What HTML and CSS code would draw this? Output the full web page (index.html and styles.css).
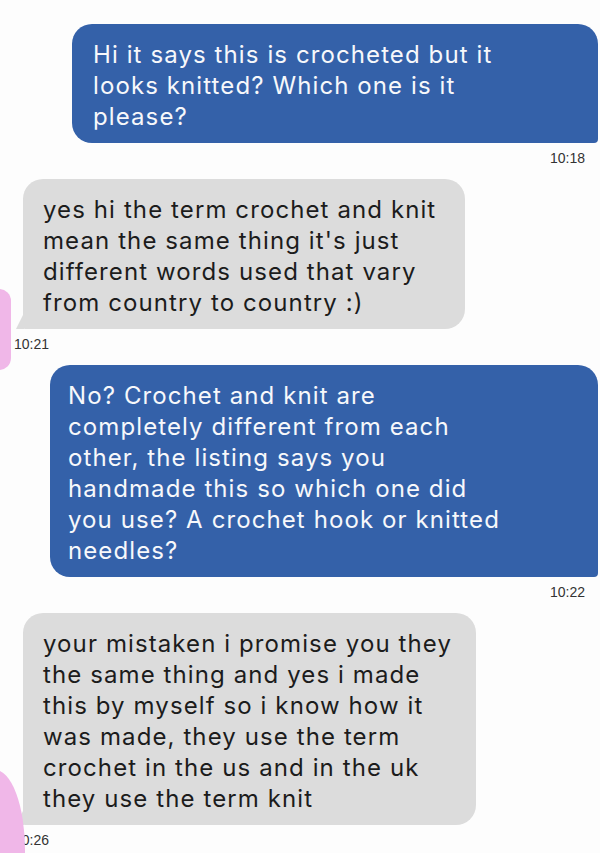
FILE: index.html
```html
<!DOCTYPE html>
<html lang="en">
<head>
    <meta charset="UTF-8">
    <meta name="viewport" content="width=device-width, initial-scale=1.0">
    <title>Messages</title>
    <link rel="stylesheet" href="styles.css">
</head>
<body>
    <div class="chat">
        <div class="msg out">
            <div class="bubble first">Hi it says this is crocheted but it<br>looks knitted? Which one is it<br>please?</div>
            <div class="time">10:18</div>
        </div>

        <div class="msg in">
            <div class="bubble second">yes hi the term crochet and knit<br>mean the same thing it's just<br>different words used that vary<br>from country to country :)</div>
            <div class="time">10:21</div>
        </div>

        <div class="msg out">
            <div class="bubble third">No? Crochet and knit are<br>completely different from each<br>other, the listing says you<br>handmade this so which one did<br>you use? A crochet hook or knitted<br>needles?</div>
            <div class="time">10:22</div>
        </div>

        <div class="msg in">
            <div class="bubble fourth">your mistaken i promise you they<br>the same thing and yes i made<br>this by myself so i know how it<br>was made, they use the term<br>crochet in the us and in the uk<br>they use the term knit</div>
            <div class="time">10:26</div>
        </div>

        <!-- avatars peeking in from the left edge -->
        <div class="avatar avatar-top"></div>
        <div class="avatar avatar-bottom"></div>
    </div>
</body>
</html>
```

FILE: styles.css
```css
/* Global Styles */
body {
    margin: 0;
    padding: 0;
    background-color: #fdfdfd;
    font-family: Inter, "Liberation Sans", sans-serif;
}

.chat {
    position: relative;
    display: flex;
    flex-direction: column;
    height: 853px;
    padding-top: 24px;
    box-sizing: border-box;
    overflow: hidden;
}

/* Message rows */
.msg {
    display: flex;
    flex-direction: column;
    margin-bottom: 13px;
}

.msg.out {
    align-items: flex-end;
    padding-right: 2px;
}

.msg.in {
    align-items: flex-start;
    padding-left: 23px;
}

.bubble {
    position: relative;
    font-size: 24px;
    line-height: 31px;
    letter-spacing: 1.1px;
    padding: 15px 20px 11px;
    border-radius: 20px;
    box-sizing: border-box;
}

.out .bubble {
    background-color: #3461a9;
    color: #f7f8fb;
    border-bottom-right-radius: 4px;
}

.in .bubble {
    background-color: #dcdcdc;
    color: #1c1c1c;
    border-bottom-left-radius: 2px;
}

/* little tail on incoming bubbles */
.in .bubble::before {
    content: "";
    position: absolute;
    left: -7px;
    bottom: 0;
    width: 8px;
    height: 16px;
    background-color: #dcdcdc;
    clip-path: polygon(100% 0, 100% 100%, 0 100%);
}

.first { width: 526px; padding-left: 21px; }
.second { width: 442px; }
.third { width: 548px; padding-left: 18px; }
.fourth { width: 453px; }

/* Timestamps */
.time {
    font-family: "Liberation Sans", Arial, sans-serif;
    font-size: 14px;
    line-height: 16px;
    color: #333;
    margin-top: 7px;
}

.out .time {
    padding-right: 13px;
}

.in .time {
    margin-left: -9px;
}

/* Avatars */
.avatar {
    position: absolute;
    background-color: #f0b7e8;
}

.avatar-top {
    left: -20px;
    top: 289px;
    width: 31px;
    height: 81px;
    border-radius: 12px;
}

.avatar-bottom {
    left: -35px;
    top: 770px;
    width: 60px;
    height: 160px;
    border-radius: 50%;
}
```
